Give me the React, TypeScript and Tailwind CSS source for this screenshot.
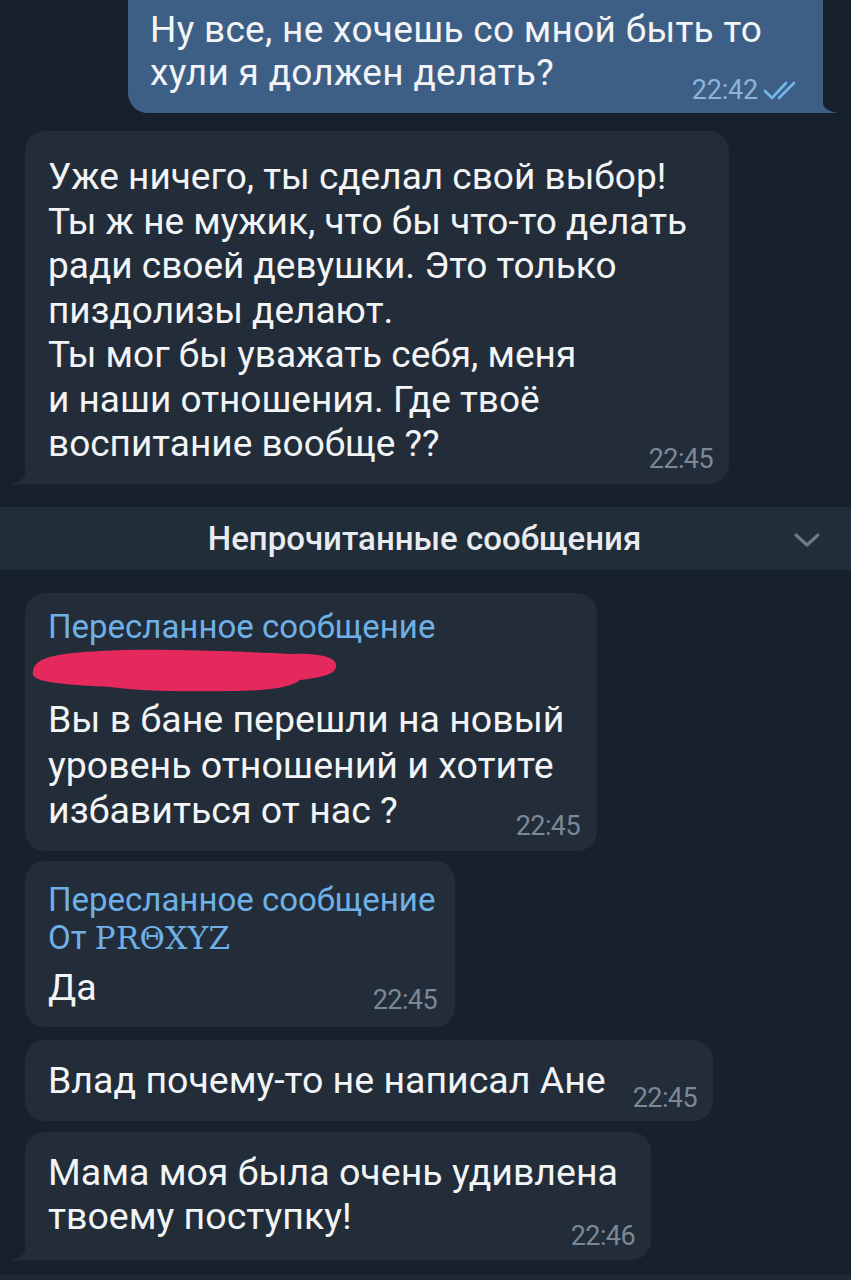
import React from "react";

const font = { fontFamily: "Roboto, 'Noto Sans', sans-serif" };

function TailLeft() {
  return (
    <svg className="absolute bottom-0 left-[-15px]" width="16" height="14" viewBox="0 0 16 14">
      <path d="M16 0 C16 7 11 12 2 13.2 Q0 13.6 1.5 14 L16 14 Z" fill="#222d39" />
    </svg>
  );
}

function TailRight() {
  return (
    <svg className="absolute bottom-0 right-[-14px]" width="15" height="14" viewBox="0 0 15 14">
      <path d="M0 0 C0 7 4 12 13 13.2 Q15 13.6 13.5 14 L0 14 Z" fill="#3d5f86" />
    </svg>
  );
}

function Time({ t, className = "" }: { t: string; className?: string }) {
  return (
    <span className={"absolute text-[27px] leading-none text-[#7b8896] tracking-[-0.6px] " + className}>{t}</span>
  );
}

export default function App() {
  return (
    <div className="w-[851px] h-[1280px] overflow-hidden bg-[#17212b] text-[#f2f4f6] flex flex-col" style={font}>
      {/* outgoing */}
      <div className="flex justify-end pr-[28px] mt-[-20px]">
        <div className="relative w-[695px] h-[133px] rounded-[20px] rounded-br-none bg-[#3d5f86] pl-[22px] pt-[28px]">
          <div className="text-[37px] leading-[43px] whitespace-nowrap tracking-[0.3px]">
            Ну все, не хочешь со мной быть то
            <br />
            хули я должен делать?
          </div>
          <span className="absolute right-[20px] bottom-[9px] flex items-center gap-[5px]">
            <span className="text-[27px] leading-none text-[#8fb3d9] tracking-[-0.2px]">22:42</span>
            <svg width="40" height="22" viewBox="0 0 40 22" fill="none" stroke="#74b6ec" strokeWidth="2.6" strokeLinecap="round" strokeLinejoin="round">
              <path d="M2 11 L9 18 L23 3" />
              <path d="M16 18 L31 3" />
            </svg>
          </span>
          <TailRight />
        </div>
      </div>

      {/* incoming 1 */}
      <div className="pl-[25px] mt-[18px]">
        <div className="relative w-[704px] h-[353px] rounded-[20px] rounded-bl-none bg-[#222d39] pl-[23px] pt-[24px]">
          <div className="text-[37px] leading-[44.5px] whitespace-nowrap">
            Уже ничего, ты сделал свой выбор!
            <br />
            Ты ж не мужик, что бы что-то делать
            <br />
            ради своей девушки. Это только
            <br />
            пиздолизы делают.
            <br />
            Ты мог бы уважать себя, меня
            <br />
            и наши отношения. Где твоё
            <br />
            воспитание вообще ??
          </div>
          <Time t="22:45" className="right-[16px] bottom-[11px]" />
          <TailLeft />
        </div>
      </div>

      {/* unread bar */}
      <div className="mt-[23px] h-[63px] bg-[#212d39] relative flex items-center justify-center">
        <span className="text-[33px] font-medium text-[#e8ecf0] mr-[2px]">Непрочитанные сообщения</span>
        <svg className="absolute right-[30px] top-[25px]" width="28" height="16" viewBox="0 0 28 16" fill="none" stroke="#6d7a86" strokeWidth="3.2" strokeLinecap="round" strokeLinejoin="round">
          <path d="M3 3 L14 13 L25 3" />
        </svg>
      </div>

      {/* forwarded 1 */}
      <div className="pl-[25px] mt-[23px]">
        <div className="relative w-[572px] h-[258px] rounded-[20px] bg-[#222d39] pl-[23px] pt-[14px]">
          <div className="text-[33px] leading-[40px] text-[#6fb0e6] whitespace-nowrap">Пересланное сообщение</div>
          <svg className="absolute left-[5px] top-[52px]" width="312" height="50" viewBox="0 0 312 50">
            <path
              d="M3 26 C4 12 30 8 70 6 C120 3 200 6 260 9 C290 8 305 12 306 20 C307 28 296 32 270 35 C262 42 240 46 200 46 C150 47 110 46 80 42 C40 40 18 38 8 34 C3 32 2 29 3 26 Z"
              fill="#e6295c"
            />
          </svg>
          <div className="mt-[50px] text-[37.5px] leading-[45.5px] whitespace-nowrap">
            Вы в бане перешли на новый
            <br />
            уровень отношений и хотите
            <br />
            избавиться от нас ?
          </div>
          <Time t="22:45" className="right-[17px] bottom-[11px]" />
        </div>
      </div>

      {/* forwarded 2 */}
      <div className="pl-[25px] mt-[10px]">
        <div className="relative w-[430px] h-[166px] rounded-[20px] bg-[#222d39] pl-[23px] pt-[20px]">
          <div className="text-[33px] leading-[38px] text-[#6fb0e6] whitespace-nowrap">
            Пересланное сообщение
            <br />
            От{" "}
            <span style={{ fontFamily: "'DejaVu Serif', serif" }} className="text-[31px] tracking-[0.3px]">
              PRΘXYZ
            </span>
          </div>
          <div className="mt-[10px] text-[37.5px] leading-[40px]">Да</div>
          <Time t="22:45" className="right-[18px] bottom-[13px]" />
        </div>
      </div>

      {/* incoming short */}
      <div className="pl-[25px] mt-[13px]">
        <div className="relative w-[688px] h-[81px] rounded-[20px] bg-[#222d39] pl-[23px] pt-[20px]">
          <div className="text-[37.5px] leading-[40px] whitespace-nowrap">Влад почему-то не написал Ане</div>
          <Time t="22:45" className="right-[16px] bottom-[9px]" />
        </div>
      </div>

      {/* incoming last */}
      <div className="pl-[25px] mt-[11px]">
        <div className="relative w-[626px] h-[128px] rounded-[20px] rounded-bl-none bg-[#222d39] pl-[23px] pt-[18px]">
          <div className="text-[37.5px] leading-[44px] whitespace-nowrap">
            Мама моя была очень удивлена
            <br />
            твоему поступку!
          </div>
          <Time t="22:46" className="right-[16px] bottom-[10px]" />
          <TailLeft />
        </div>
      </div>

      <div className="mt-auto h-[5px] bg-[#1f2a35]" />
    </div>
  );
}
